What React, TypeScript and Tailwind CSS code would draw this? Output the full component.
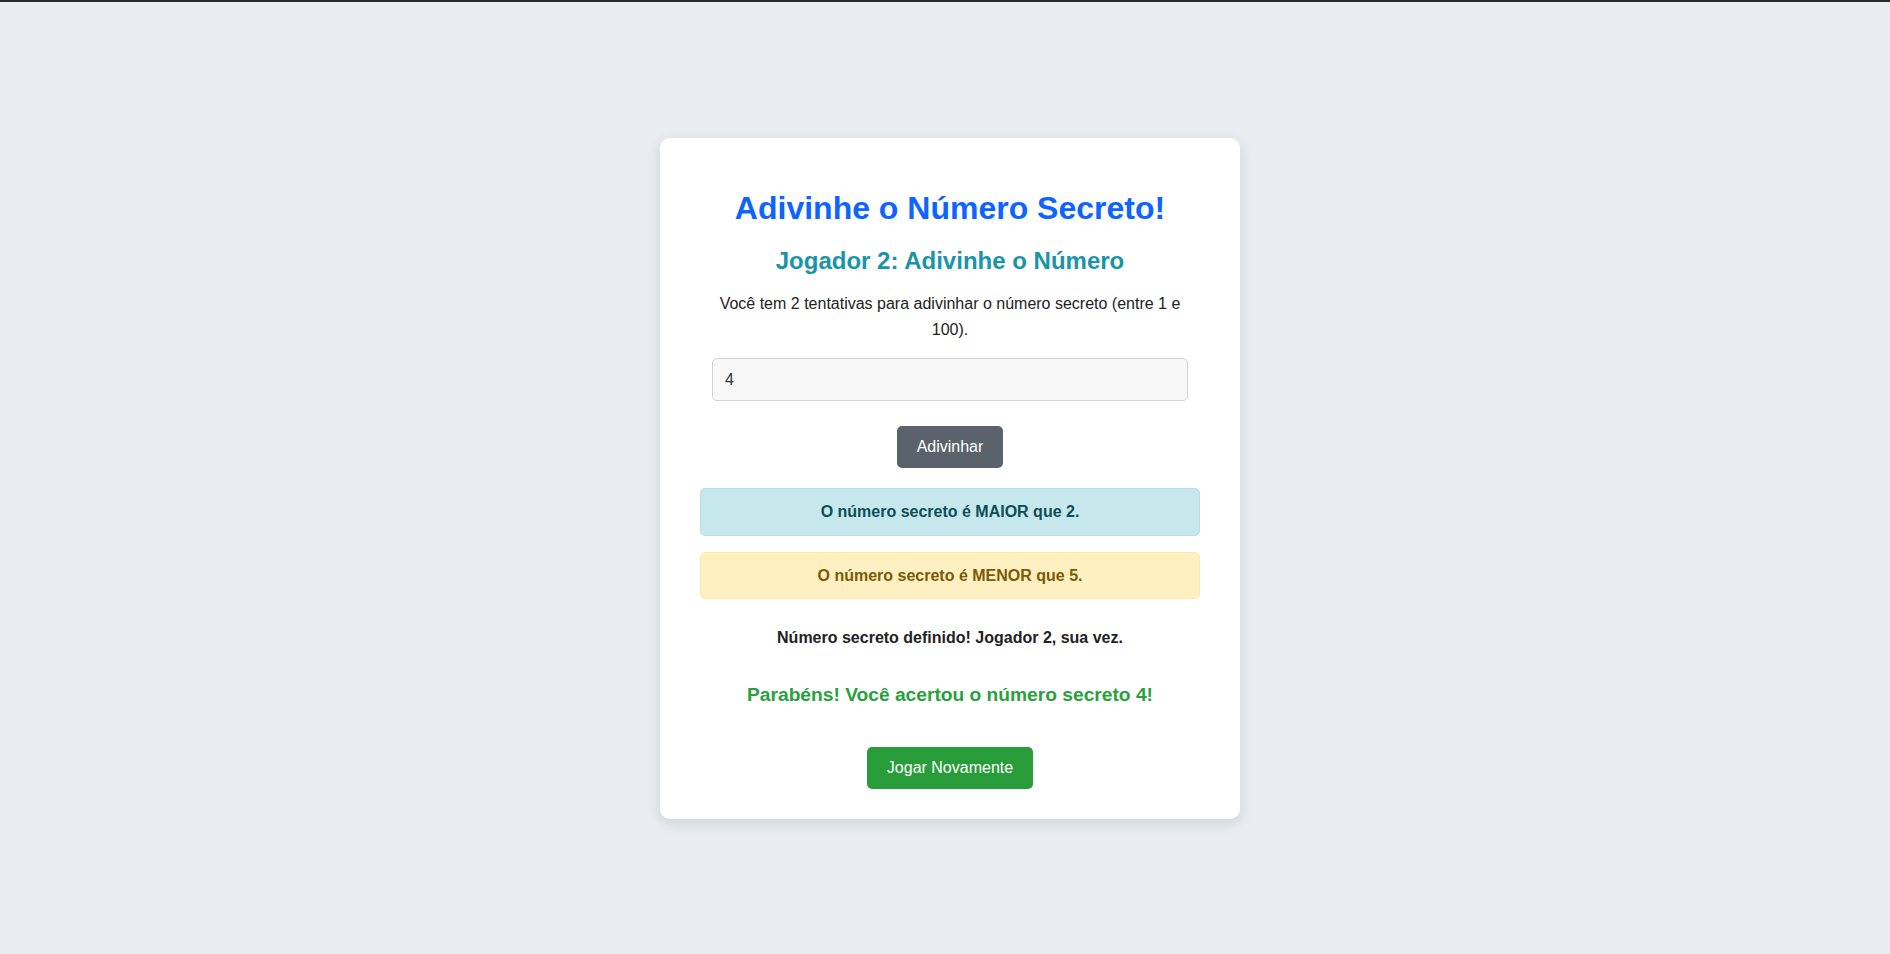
import React from "react";

export default function App() {
  return (
    <div className="min-h-[954px] bg-[#e9edf1] font-['Liberation_Sans',Arial,sans-serif]">
      {/* window top edge */}
      <div className="h-[2px] bg-[#2a2a2a]" />

      <div className="flex justify-center pl-[10px] pt-[136px]">
        <div className="w-[580px] rounded-[10px] bg-white px-[40px] pt-[51px] pb-[30px] text-center shadow-[0_4px_14px_rgba(0,0,0,0.12)]">
          <h1 className="text-[32px] font-bold leading-[1.2] text-[#0d64ff]">
            Adivinhe o Número Secreto!
          </h1>
          <h2 className="mt-[20px] text-[24px] font-bold leading-[1.2] text-[#1a94a8]">
            Jogador 2: Adivinhe o Número
          </h2>
          <p className="mt-[15px] text-[16px] leading-[26px] text-[#222]">
            Você tem 2 tentativas para adivinhar o número secreto (entre 1 e 100).
          </p>

          <input
            type="number"
            defaultValue={4}
            className="mx-auto mt-[15px] block h-[43px] w-[476px] rounded-[5px] border border-[#ced4da] bg-[#f8f8f8] px-[12px] text-[16px] text-[#333] outline-none"
          />

          <button className="mt-[25px] h-[42px] rounded-[5px] bg-[#5a636b] px-[20px] text-[16px] text-white">
            Adivinhar
          </button>

          <div className="mt-[20px] rounded-[5px] border border-[#b6dfe5] bg-[#c6e7ec] py-[14px] text-[16px] font-bold leading-[18px] text-[#0c4e5a]">
            O número secreto é MAIOR que 2.
          </div>
          <div className="mt-[16px] rounded-[5px] border border-[#ffe8a8] bg-[#fff0c2] py-[14px] text-[16px] font-bold leading-[17px] text-[#7a5a05]">
            O número secreto é MENOR que 5.
          </div>

          <p className="mt-[30px] text-[16px] font-bold leading-[18px] text-[#222]">
            Número secreto definido! Jogador 2, sua vez.
          </p>

          <p className="mt-[37px] text-[19.2px] font-bold leading-[22px] text-[#28a03c]">
            Parabéns! Você acertou o número secreto 4!
          </p>

          <button className="mt-[41px] h-[42px] rounded-[5px] bg-[#279c38] px-[20px] text-[16px] text-white">
            Jogar Novamente
          </button>
        </div>
      </div>
    </div>
  );
}
